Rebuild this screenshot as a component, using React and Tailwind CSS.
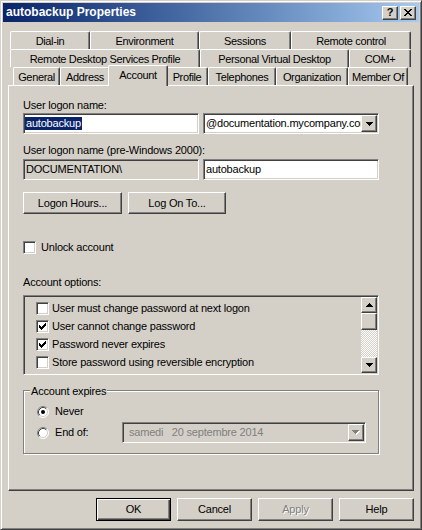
import React from "react";

const RAISED =
  "border border-t-white border-l-white border-r-[#404040] border-b-[#404040] shadow-[inset_-1px_-1px_#808080]";
const SUNKEN =
  "border border-t-[#808080] border-l-[#808080] border-r-white border-b-white shadow-[inset_1px_1px_#404040,inset_-1px_-1px_#d4d0c8]";

const ARROW_DOWN = "M0 0h7v1h-7z M1 1h5v1h-5z M2 2h3v1h-3z M3 3h1v1h-1z";
const ARROW_UP = "M3 0h1v1h-1z M2 1h3v1h-3z M1 2h5v1h-5z M0 3h7v1h-7z";

function Arrow({ up }) {
  return (
    <svg width="7" height="4" viewBox="0 0 7 4">
      <path d={up ? ARROW_UP : ARROW_DOWN} fill="#000" />
    </svg>
  );
}

function DisabledArrow() {
  return (
    <svg width="8" height="5" viewBox="0 0 8 5">
      <path d={ARROW_DOWN} fill="#fff" transform="translate(1 1)" />
      <path d={ARROW_DOWN} fill="#808080" />
    </svg>
  );
}

function Check({ checked }) {
  return (
    <span className={`w-[13px] h-[13px] shrink-0 bg-white flex items-center justify-center ${SUNKEN}`}>
      {checked && (
        <svg width="7" height="7" viewBox="0 0 7 7">
          <path
            d="M6 0h1v1h-1z M5 1h2v1h-2z M0 2h1v1h-1z M4 2h3v1h-3z M0 3h2v1h-2z M3 3h3v1h-3z M0 4h5v1h-5z M1 5h3v1h-3z M2 6h1v1h-1z"
            fill="#000"
          />
        </svg>
      )}
    </span>
  );
}

function Radio({ on }) {
  return (
    <svg width="12" height="12" viewBox="0 0 12 12" className="shrink-0">
      <circle cx="6" cy="6" r="5" fill="#fff" />
      <path d="M2.11 9.89 A5.5 5.5 0 0 1 9.89 2.11" fill="none" stroke="#808080" />
      <path d="M9.89 2.11 A5.5 5.5 0 0 1 2.11 9.89" fill="none" stroke="#fff" />
      <path d="M2.82 9.18 A4.5 4.5 0 0 1 9.18 2.82" fill="none" stroke="#404040" />
      <path d="M9.18 2.82 A4.5 4.5 0 0 1 2.82 9.18" fill="none" stroke="#d4d0c8" />
      {on && <circle cx="6" cy="6" r="2" fill="#000" />}
    </svg>
  );
}

function Tab({ label, w }) {
  return (
    <div
      className={`${w} h-full shrink-0 pt-[1px] flex items-center justify-center whitespace-nowrap tracking-[-0.35px] border-t border-l border-r border-t-white border-l-white border-r-[#404040] shadow-[inset_-1px_0_#808080] rounded-t-[2px]`}
    >
      {label}
    </div>
  );
}

const row1 = [
  ["Dial-in", "w-[80px]"],
  ["Environment", "w-[109px]"],
  ["Sessions", "w-[92px]"],
  ["Remote control", "w-[120px]"],
];
const row2 = [
  ["Remote Desktop Services Profile", "w-[190px]"],
  ["Personal Virtual Desktop", "w-[149px]"],
  ["COM+", "w-[62px]"],
];

const options = [
  ["User must change password at next logon", false],
  ["User cannot change password", true],
  ["Password never expires", true],
  ["Store password using reversible encryption", false],
];

export default function App() {
  return (
    <div className="w-[422px] h-[530px] overflow-hidden bg-[#d4d0c8] p-[2px] flex flex-col border border-t-[#d4d0c8] border-l-[#d4d0c8] border-r-[#404040] border-b-[#404040] shadow-[inset_1px_1px_#fff,inset_-1px_-1px_#808080] font-['Liberation_Sans',Arial,sans-serif] text-[11px] leading-[13px] tracking-[-0.2px] text-black select-none">
      {/* TITLE BAR */}
      <div className="h-[19px] shrink-0 flex items-center bg-gradient-to-r from-[#0a246a] to-[#a6caf0] pl-[3px] pr-[3px]">
        <span className="flex-1 text-[12px] font-bold tracking-normal text-white">autobackup Properties</span>
        <div className={`w-[16px] h-[14px] bg-[#d4d0c8] flex items-center justify-center text-[11px] font-bold ${RAISED}`}>
          ?
        </div>
        <div className={`ml-[2px] w-[16px] h-[14px] bg-[#d4d0c8] flex items-center justify-center ${RAISED}`}>
          <svg width="8" height="7" viewBox="0 0 8 7">
            <path
              d="M0 0h2v1h-2z M6 0h2v1h-2z M1 1h2v1h-2z M5 1h2v1h-2z M2 2h4v1h-4z M3 3h2v1h-2z M2 4h4v1h-4z M1 5h2v1h-2z M5 5h2v1h-2z M0 6h2v1h-2z M6 6h2v1h-2z"
              fill="#000"
            />
          </svg>
        </div>
      </div>

      {/* TABS */}
      <div className="mt-[9px] ml-[7px] flex h-[18px] shrink-0">
        {row1.map(([l, w]) => (
          <Tab key={l} label={l} w={w} />
        ))}
      </div>
      <div className="ml-[7px] flex h-[18px] shrink-0">
        {row2.map(([l, w]) => (
          <Tab key={l} label={l} w={w} />
        ))}
      </div>
      <div className="ml-[10px] flex items-end h-[18px] shrink-0">
        <Tab label="General" w="w-[47px]" />
        <Tab label="Address" w="w-[50px]" />
        <div className="relative z-10 -mx-[2px] mb-[-1px] w-[60px] h-[21px] shrink-0 pb-[2px] flex items-center justify-center tracking-[-0.35px] bg-[#d4d0c8] border-t border-l border-r border-t-white border-l-white border-r-[#404040] shadow-[inset_-1px_0_#808080] rounded-t-[2px]">
          Account
        </div>
        <Tab label="Profile" w="w-[42px]" />
        <Tab label="Telephones" w="w-[68px]" />
        <Tab label="Organization" w="w-[72px]" />
        <Tab label="Member Of" w="w-[60px]" />
      </div>

      {/* PANEL */}
      <div className={`ml-[5px] w-[406px] h-[406px] shrink-0 pl-[14px] pt-[13px] ${RAISED}`}>
        <div className="w-[356px] flex flex-col">
          <div>User logon name:</div>
          <div className="mt-[1px] flex gap-[4px]">
            <div className={`w-[176px] h-[21px] bg-white flex items-center pl-[1px] ${SUNKEN}`}>
              <span className="bg-[#0a246a] text-white px-[1px]">autobackup</span>
            </div>
            <div className={`w-[176px] h-[21px] bg-white flex items-center ${SUNKEN}`}>
              <span className="flex-1 overflow-hidden whitespace-nowrap pl-[2px]">@documentation.mycompany.com</span>
              <div className={`w-[16px] h-[17px] mr-[1px] shrink-0 bg-[#d4d0c8] flex items-center justify-center ${RAISED}`}>
                <Arrow />
              </div>
            </div>
          </div>

          <div className="mt-[10px]">User logon name (pre-Windows 2000):</div>
          <div className="mt-[2px] flex gap-[4px]">
            <div className={`w-[176px] h-[21px] bg-[#d4d0c8] flex items-center pl-[2px] ${SUNKEN}`}>DOCUMENTATION\</div>
            <div className={`w-[176px] h-[21px] bg-white flex items-center pl-[2px] ${SUNKEN}`}>autobackup</div>
          </div>

          <div className="mt-[12px] flex gap-[6px]">
            <div className={`w-[99px] h-[22px] flex items-center justify-center ${RAISED}`}>Logon Hours...</div>
            <div className={`w-[98px] h-[22px] flex items-center justify-center ${RAISED}`}>Log On To...</div>
          </div>

          <div className="mt-[27px] flex items-center gap-[5px]">
            <Check />
            <span>Unlock account</span>
          </div>

          <div className="mt-[22px]">Account options:</div>
          <div className={`mt-[6px] h-[80px] flex ${SUNKEN}`}>
            <div className="flex-1 pt-[3px] pl-[12px] flex flex-col">
              {options.map(([t, c]) => (
                <div key={t} className="h-[18px] flex items-center gap-[3px]">
                  <Check checked={c} />
                  <span className="whitespace-nowrap">{t}</span>
                </div>
              ))}
            </div>
            <div className="w-[16px] my-[1px] mr-[1px] flex flex-col shrink-0">
              <div className={`h-[16px] flex items-center justify-center ${RAISED}`}>
                <Arrow up />
              </div>
              <div className={`h-[17px] ${RAISED}`} />
              <div className="flex-1 bg-[image:repeating-conic-gradient(#fff_0_25%,#d4d0c8_0_50%)] bg-[length:2px_2px]" />
              <div className={`h-[16px] flex items-center justify-center ${RAISED}`}>
                <Arrow />
              </div>
            </div>
          </div>

          <div className="relative mt-[15px] h-[64px] border border-[#808080] shadow-[inset_1px_1px_#fff,1px_1px_#fff] pl-[13px] pt-[14px]">
            <span className="absolute left-[6px] top-[-6px] bg-[#d4d0c8] px-[1px]">Account expires</span>
            <div className="h-[13px] flex items-center gap-[6px]">
              <Radio on />
              <span>Never</span>
            </div>
            <div className="mt-[4px] h-[21px] flex items-center gap-[6px]">
              <Radio />
              <span className="w-[61px]">End of:</span>
              <div className={`w-[244px] h-[21px] bg-[#d4d0c8] flex items-center ${SUNKEN}`}>
                <span className="flex-1 pl-[6px] whitespace-pre text-[#808080]">samedi   20 septembre 2014</span>
                <div className={`w-[16px] h-[17px] mr-[1px] shrink-0 flex items-center justify-center ${RAISED}`}>
                  <DisabledArrow />
                </div>
              </div>
            </div>
          </div>
        </div>
      </div>

      {/* BUTTONS */}
      <div className="mt-[7px] pr-[5px] flex justify-end gap-[6px] shrink-0">
        <div className="w-[75px] h-[23px] flex items-center justify-center border border-black shadow-[inset_1px_1px_#fff,inset_-1px_-1px_#404040,inset_-2px_-2px_#808080]">
          OK
        </div>
        <div className={`w-[75px] h-[23px] flex items-center justify-center ${RAISED}`}>Cancel</div>
        <div className={`w-[75px] h-[23px] flex items-center justify-center text-[#808080] [text-shadow:1px_1px_#fff] ${RAISED}`}>
          Apply
        </div>
        <div className={`w-[75px] h-[23px] flex items-center justify-center ${RAISED}`}>Help</div>
      </div>
    </div>
  );
}
